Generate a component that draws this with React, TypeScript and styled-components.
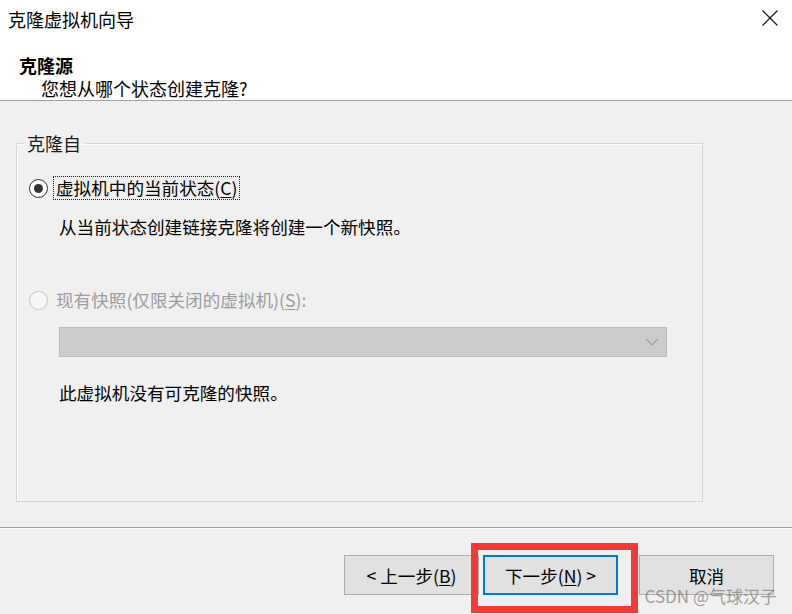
import React from "react";
import styled, { createGlobalStyle } from "styled-components";

const GlobalStyle = createGlobalStyle`
  html, body {
    margin: 0;
    padding: 0;
    background: #f0f0f0;
  }
  body {
    font-family: "Noto Sans CJK SC", "Noto Sans", sans-serif;
    color: #000;
  }
  * { box-sizing: border-box; }
`;

const Window = styled.div`
  position: relative;
  width: 792px;
  height: 614px;
  overflow: hidden;
  display: flex;
  flex-direction: column;
  background: #f0f0f0;
`;

const TitleBar = styled.div`
  height: 37px;
  background: #fff;
  display: flex;
  align-items: center;
  justify-content: space-between;
  padding: 0 14px 0 8px;
  font-size: 18px;
  line-height: 24px;
`;

const CloseButton = styled.div`
  width: 16px;
  height: 16px;
  display: flex;
  align-items: center;
  justify-content: center;
  margin-top: -1px;
`;

const Header = styled.div`
  background: #fff;
  height: 64px;
  border-bottom: 1px solid #a0a0a0;
  padding: 16px 0 0 19px;
  display: flex;
  flex-direction: column;
`;

const HeaderTitle = styled.div`
  font-size: 18px;
  line-height: 24px;
  font-weight: 700;
`;

const HeaderSub = styled.div`
  font-size: 18px;
  line-height: 23px;
  padding-left: 22px;
`;

const Body = styled.div`
  flex: 1;
  display: flex;
  flex-direction: column;
  padding: 30px 89px 25px 16px;
`;

const Group = styled.fieldset`
  flex: 1;
  margin: 0;
  padding: 0;
  min-width: 0;
  border: 1px solid #d5d5d5;
  box-shadow: inset 1px 1px 0 #fbfbfb;
`;

const Legend = styled.legend`
  margin-left: 6px;
  padding: 0 4px;
  font-size: 18px;
  line-height: 24px;
  color: #1a1a1a;
`;

const GroupContent = styled.div`
  display: flex;
  flex-direction: column;
  padding: 21px 0 0 12px;
`;

const RadioRow = styled.div<{ $gap?: number }>`
  display: flex;
  align-items: center;
  height: 24px;
  margin-top: ${(p) => p.$gap ?? 0}px;
`;

const RadioCircle = styled.span<{ $checked?: boolean; $disabled?: boolean }>`
  width: 19px;
  height: 19px;
  border-radius: 50%;
  border: 1px solid ${(p) => (p.$disabled ? "#c6c6c6" : "#333")};
  background: ${(p) => (p.$disabled ? "#f6f6f6" : "#fff")};
  display: flex;
  align-items: center;
  justify-content: center;
  flex: none;
  &::after {
    content: "";
    display: ${(p) => (p.$checked ? "block" : "none")};
    width: 9px;
    height: 9px;
    border-radius: 50%;
    background: #333;
  }
`;

const RadioLabel = styled.span<{ $focused?: boolean; $disabled?: boolean }>`
  margin-left: 5px;
  padding: 0 2px;
  height: 24px;
  font-size: 17.6px;
  line-height: 22px;
  border: 1px dotted ${(p) => (p.$focused ? "#222" : "transparent")};
  color: ${(p) => (p.$disabled ? "#9d9d9d" : "#000")};
  white-space: nowrap;
`;

const Key = styled.span`
  text-decoration: underline;
  text-underline-offset: 2px;
`;

const Description = styled.div<{ $gap: number }>`
  margin-top: ${(p) => p.$gap}px;
  padding-left: 30px;
  font-size: 17.6px;
  line-height: 24px;
  white-space: nowrap;
`;

const Select = styled.div`
  margin: 15px 0 0 30px;
  width: 608px;
  height: 30px;
  background: #cccccc;
  border: 1px solid #bcbcbc;
  display: flex;
  align-items: center;
  justify-content: flex-end;
  padding-right: 7px;
`;

const Footer = styled.div`
  height: 87px;
  border-top: 1px solid #a0a0a0;
  box-shadow: inset 0 1px 0 #fcfcfc;
  display: flex;
  justify-content: flex-end;
  align-items: flex-start;
  padding: 27px 18px 0 0;
`;

const Button = styled.button<{ $primary?: boolean; $gapLeft?: number }>`
  width: 135px;
  height: 40px;
  margin-left: ${(p) => p.$gapLeft ?? 0}px;
  background: #e1e1e1;
  border: ${(p) => (p.$primary ? "2px solid #0078d7" : "1px solid #adadad")};
  font-family: "Noto Sans CJK SC", "Noto Sans", sans-serif;
  font-size: 17.6px;
  color: #000;
  padding: 0;
  display: flex;
  align-items: center;
  justify-content: center;
  white-space: pre;
`;

const Highlight = styled.div`
  position: absolute;
  left: 471px;
  top: 543px;
  width: 167px;
  height: 70px;
  border: 7px solid #f13a3a;
  pointer-events: none;
`;

const Watermark = styled.div`
  position: absolute;
  right: 15px;
  top: 584px;
  font-size: 17px;
  line-height: 24px;
  color: rgba(120, 120, 120, 0.7);
  white-space: nowrap;
  pointer-events: none;
`;

export default function App() {
  return (
    <Window>
      <GlobalStyle />
      <TitleBar>
        <span>克隆虚拟机向导</span>
        <CloseButton>
          <svg width="16" height="16" viewBox="0 0 16 16">
            <path d="M0.5 0.5 L15.5 15.5 M15.5 0.5 L0.5 15.5" stroke="#111" strokeWidth="1.1" fill="none" />
          </svg>
        </CloseButton>
      </TitleBar>
      <Header>
        <HeaderTitle>克隆源</HeaderTitle>
        <HeaderSub>您想从哪个状态创建克隆?</HeaderSub>
      </Header>
      <Body>
        <Group>
          <Legend>克隆自</Legend>
          <GroupContent>
            <RadioRow>
              <RadioCircle $checked />
              <RadioLabel $focused>
                虚拟机中的当前状态(<Key>C</Key>)
              </RadioLabel>
            </RadioRow>
            <Description $gap={15}>从当前状态创建链接克隆将创建一个新快照。</Description>
            <RadioRow $gap={49}>
              <RadioCircle $disabled />
              <RadioLabel $disabled>
                现有快照(仅限关闭的虚拟机)(<Key>S</Key>):
              </RadioLabel>
            </RadioRow>
            <Select>
              <svg width="14" height="8" viewBox="0 0 14 8">
                <path d="M1 1 L7 7 L13 1" stroke="#a3a3a3" strokeWidth="1.2" fill="none" />
              </svg>
            </Select>
            <Description $gap={24}>此虚拟机没有可克隆的快照。</Description>
          </GroupContent>
        </Group>
      </Body>
      <Footer>
        <Button>
          {"< 上一步("}
          <Key>B</Key>
          {")"}
        </Button>
        <Button $primary $gapLeft={4}>
          {"下一步("}
          <Key>N</Key>
          {") >"}
        </Button>
        <Button $gapLeft={21}>取消</Button>
      </Footer>
      <Highlight />
      <Watermark>CSDN @气球汉子</Watermark>
    </Window>
  );
}
